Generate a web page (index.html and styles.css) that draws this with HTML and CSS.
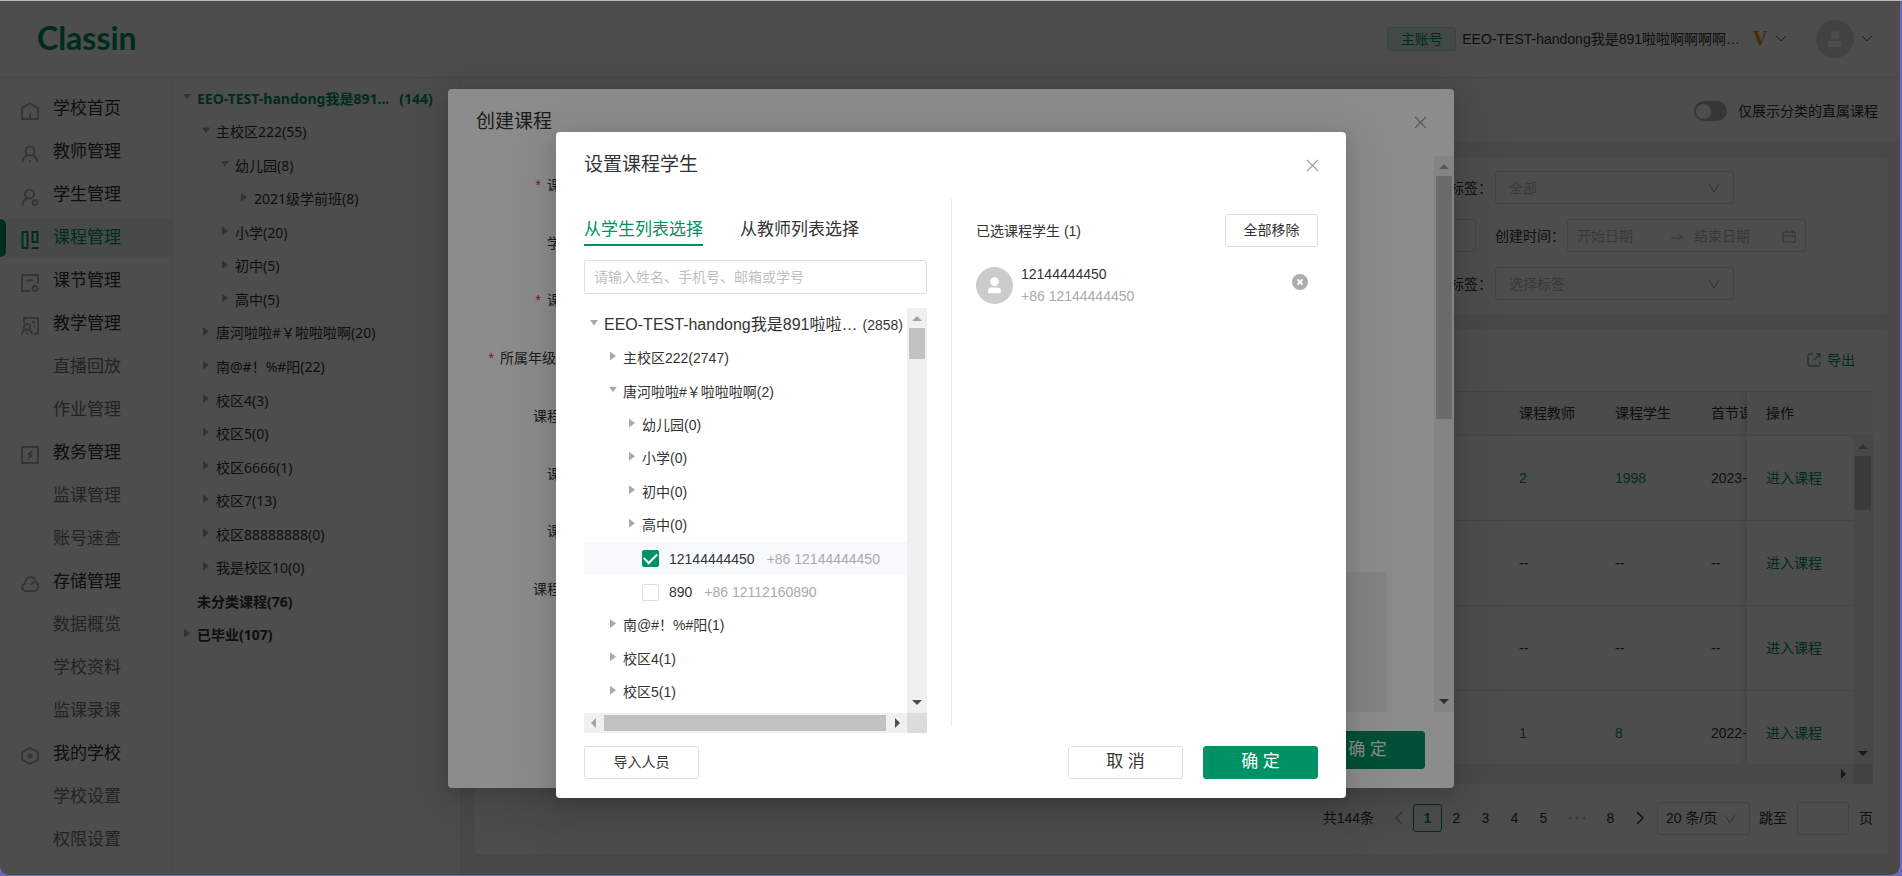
FILE: index.html
```html
<!DOCTYPE html>
<html lang="zh-CN">
<head>
<meta charset="utf-8">
<title>ClassIn</title>
<link rel="stylesheet" href="styles.css">
</head>
<body>
<div class="window">
  <header class="topbar">
    <div class="logo">Classin</div>
    <div class="account">
      <span class="badge">主账号</span>
      <span class="school">EEO-TEST-handong我是891啦啦啊啊啊啊…</span>
      <span class="vip">V</span>
      <svg class="chev" viewBox="0 0 12 8"><path d="M1 1l5 5 5-5"/></svg>
      <svg class="avatar" viewBox="0 0 38 38"><circle cx="19" cy="19" r="19" fill="#dcdcdc"/><circle cx="19" cy="15" r="4" fill="#fff"/><rect x="12" y="21" width="13" height="6" rx="1" fill="#fff"/></svg>
      <svg class="chev" viewBox="0 0 12 8"><path d="M1 1l5 5 5-5"/></svg>
    </div>
  </header>

  <div class="main">
    <nav class="sidebar">
      <a href="#"><svg viewBox="0 0 18 18"><path d="M1 6L9 1.500l8 4.500V17H1zM9 11v6"/></svg>学校首页</a>
      <a href="#"><svg viewBox="0 0 18 18"><circle cx="9" cy="6" r="4.500"/><path d="M1.500 17.500c0-3.500 2-6 4.500-7M16.500 17.500c0-3.500-2-6-4.500-7M9 15v2.500"/></svg>教师管理</a>
      <a href="#"><svg viewBox="0 0 18 18"><circle cx="8.500" cy="6" r="4.500"/><path d="M1.500 17.500c0-3.500 2-6 4.500-7"/><circle cx="14" cy="14.500" r="2.500"/></svg>学生管理</a>
      <a href="#" class="active"><svg viewBox="0 0 18 18"><path d="M1.500 1h5v16h-5zM11.500 1h5v10h-5zM10.500 17h7"/></svg>课程管理</a>
      <a href="#"><svg viewBox="0 0 18 18"><path d="M9 17H1V1h16v8M6 6.500h6"/><circle cx="14" cy="14.500" r="2.500"/></svg>课节管理</a>
      <a href="#"><svg viewBox="0 0 18 18"><path d="M3 6V1h14v15.500h-4M11 5h3M12 9h2M1 17.500c0-2.500 1-4 2.500-4.500M11 17.500c0-2.500-1-4-2.500-4.500M6 15.500v2"/><circle cx="6" cy="10" r="3"/></svg>教学管理</a>
      <a href="#" class="sub">直播回放</a>
      <a href="#" class="sub">作业管理</a>
      <a href="#"><svg viewBox="0 0 18 18"><path d="M1 1h16v16H1z"/><path d="M11.500 5.500L8 8l2.500 2L7 12.500"/></svg>教务管理</a>
      <a href="#" class="sub">监课管理</a>
      <a href="#" class="sub">账号速查</a>
      <a href="#"><svg viewBox="0 0 18 18"><path d="M4.500 16a3.700 3.700 0 0 1-.3-7.300C4.500 5 6.500 2 9.500 2s4.500 2.500 4.700 5c2 .5 3 2.300 3 4.500 0 2.500-1.800 4.500-4 4.500zM13 7.500c-1.500 0-2.500 1-2.500 2.500"/></svg>存储管理</a>
      <a href="#" class="sub">数据概览</a>
      <a href="#" class="sub">学校资料</a>
      <a href="#" class="sub">监课录课</a>
      <a href="#"><svg viewBox="0 0 18 18"><path d="M9 1l8 4.200v7.600L9 17l-8-4.200V5.200z"/><circle cx="9" cy="9" r="1.500"/></svg>我的学校</a>
      <a href="#" class="sub">学校设置</a>
      <a href="#" class="sub">权限设置</a>
    </nav>

    <aside class="campus tree">
      <div class="row lv0 strong green"><i class="caret down"></i><span>EEO-TEST-handong我是891...</span><span class="count">(144)</span></div>
      <div class="row lv1"><i class="caret down"></i><span>主校区222(55)</span></div>
      <div class="row lv2"><i class="caret down"></i><span>幼儿园(8)</span></div>
      <div class="row lv3"><i class="caret"></i><span>2021级学前班(8)</span></div>
      <div class="row lv2"><i class="caret"></i><span>小学(20)</span></div>
      <div class="row lv2"><i class="caret"></i><span>初中(5)</span></div>
      <div class="row lv2"><i class="caret"></i><span>高中(5)</span></div>
      <div class="row lv1"><i class="caret"></i><span>唐河啦啦#￥啦啦啦啊(20)</span></div>
      <div class="row lv1"><i class="caret"></i><span>南@#！%#阳(22)</span></div>
      <div class="row lv1"><i class="caret"></i><span>校区4(3)</span></div>
      <div class="row lv1"><i class="caret"></i><span>校区5(0)</span></div>
      <div class="row lv1"><i class="caret"></i><span>校区6666(1)</span></div>
      <div class="row lv1"><i class="caret"></i><span>校区7(13)</span></div>
      <div class="row lv1"><i class="caret"></i><span>校区88888888(0)</span></div>
      <div class="row lv1"><i class="caret"></i><span>我是校区10(0)</span></div>
      <div class="row lv0 strong"><i class="caret none"></i><span>未分类课程(76)</span></div>
      <div class="row lv0 strong"><i class="caret"></i><span>已毕业(107)</span></div>
    </aside>

    <section class="content">
      <div class="subbar">
        <label class="switch"><input type="checkbox" role="switch"><span>仅展示分类的直属课程</span></label>
      </div>
      <div class="card filters">
        <div class="frow">
          <label for="f-tag">标签：</label>
          <div class="group"><div class="pick"><select id="f-tag"><option>全部</option></select><svg class="vee" viewBox="0 0 12 10"><path d="M1 1l5 8 5-8"/></svg></div></div>
        </div>
        <div class="frow">
          <input class="box grow" type="text" aria-label="搜索">
          <div class="group dates"><label for="f-from">创建时间：</label>
            <div class="box range"><input id="f-from" type="text" placeholder="开始日期"><svg class="arrow" viewBox="0 0 12 8"><path d="M0 6h12L8 2"/></svg><input type="text" placeholder="结束日期" aria-label="结束日期"><svg class="cal" viewBox="0 0 14 14"><path d="M1 3h12v10H1zM1 7h12M4 1v3M10 1v3"/></svg></div>
          </div>
        </div>
        <div class="frow">
          <label for="f-tag2">标签：</label>
          <div class="group"><div class="pick"><select id="f-tag2"><option>选择标签</option></select><svg class="vee" viewBox="0 0 12 10"><path d="M1 1l5 8 5-8"/></svg></div></div>
        </div>
      </div>

      <div class="card list">
        <div class="tools"><a href="#"><svg viewBox="0 0 14 14"><path d="M6 1H2.500A1.500 1.500 0 0 0 1 2.500v9A1.500 1.500 0 0 0 2.500 13h9a1.500 1.500 0 0 0 1.500-1.500V9M9 1h4v4M13 1L7 7"/></svg>导出</a></div>
        <div class="grid">
          <div class="viewport">
            <table>
              <colgroup><col><col class="c96"><col class="c96"><col class="c52"><col class="c106"></colgroup>
              <thead><tr><th></th><th>课程教师</th><th>课程学生</th><th>首节课</th><th class="fixed">操作</th></tr></thead>
              <tbody>
                <tr><td></td><td><a href="#">2</a></td><td><a href="#">1998</a></td><td>2023-</td><td class="fixed"><a href="#">进入课程</a></td></tr>
                <tr><td></td><td>--</td><td>--</td><td>--</td><td class="fixed"><a href="#">进入课程</a></td></tr>
                <tr><td></td><td>--</td><td>--</td><td>--</td><td class="fixed"><a href="#">进入课程</a></td></tr>
                <tr><td></td><td><a href="#">1</a></td><td><a href="#">8</a></td><td>2022-</td><td class="fixed"><a href="#">进入课程</a></td></tr>
              </tbody>
            </table>
          </div>
          <div class="vside"><div class="vhead"></div><div class="vbar"><i class="tri up"></i><i class="thumb t54"></i><i class="tri dn"></i></div></div>
          <div class="hbar"><i class="tri rt"></i></div>
          <div class="corner"></div>
        </div>
        <div class="pager">
          <span class="total">共144条</span>
          <button class="pg off" aria-label="上一页"><svg viewBox="0 0 8 14"><path d="M7 1L1 7l6 6"/></svg></button>
          <button class="pg on">1</button><button class="pg">2</button><button class="pg">3</button><button class="pg">4</button><button class="pg">5</button>
          <svg class="dots" viewBox="0 0 38 6"><circle cx="12" cy="3" r="1.500"/><circle cx="19" cy="3" r="1.500"/><circle cx="26" cy="3" r="1.500"/></svg><button class="pg">8</button>
          <button class="pg" aria-label="下一页"><svg viewBox="0 0 8 14"><path d="M1 1l6 6-6 6"/></svg></button>
          <div class="pick size"><select aria-label="每页条数"><option>20 条/页</option></select><svg class="vee" viewBox="0 0 12 10"><path d="M1 1l5 8 5-8"/></svg></div>
          <label for="jump">跳至</label><input id="jump" class="box" type="text"><span>页</span>
        </div>
      </div>
    </section>
  </div>

  <div class="mask first">
    <div class="dialog course">
      <div class="dhead"><h2>创建课程</h2><button class="close" aria-label="关闭"><svg viewBox="0 0 14 14"><path d="M1 1l12 12M13 1L1 13"/></svg></button></div>
      <div class="dbody">
        <div class="labels">
          <div><b>*</b>课</div>
          <div>学</div>
          <div><b>*</b>课</div>
          <div class="long"><b>*</b>所属年级</div>
          <div>课程</div>
          <div>课</div>
          <div>课</div>
          <div>课程</div>
        </div>
        <div class="panel"></div>
        <div class="vbar"><i class="tri up"></i><i class="thumb t243"></i><i class="tri dn"></i></div>
      </div>
      <div class="dfoot"><button class="btn primary tall">确 定</button></div>
    </div>
  </div>

  <div class="mask second">
    <div class="dialog students">
      <div class="dhead"><h2>设置课程学生</h2><button class="close" aria-label="关闭"><svg viewBox="0 0 14 14"><path d="M1 1l12 12M13 1L1 13"/></svg></button></div>
      <div class="split">
        <div class="left">
          <div class="tabs"><button class="tab on">从学生列表选择</button><button class="tab">从教师列表选择</button></div>
          <input class="search" type="text" placeholder="请输入姓名、手机号、邮箱或学号" aria-label="搜索学生">
          <div class="scroller">
            <div class="tree people">
              <div class="row lv0 root"><i class="caret down"></i><span>EEO-TEST-handong我是891啦啦…</span><span class="count">(2858)</span></div>
              <div class="row lv1"><i class="caret"></i><span>主校区222(2747)</span></div>
              <div class="row lv1"><i class="caret down"></i><span>唐河啦啦#￥啦啦啦啊(2)</span></div>
              <div class="row lv2"><i class="caret"></i><span>幼儿园(0)</span></div>
              <div class="row lv2"><i class="caret"></i><span>小学(0)</span></div>
              <div class="row lv2"><i class="caret"></i><span>初中(0)</span></div>
              <div class="row lv2"><i class="caret"></i><span>高中(0)</span></div>
              <label class="row leaf picked"><input type="checkbox" checked><span>12144444450</span><em>+86 12144444450</em></label>
              <label class="row leaf"><input type="checkbox"><span>890</span><em>+86 12112160890</em></label>
              <div class="row lv1"><i class="caret"></i><span>南@#！%#阳(1)</span></div>
              <div class="row lv1"><i class="caret"></i><span>校区4(1)</span></div>
              <div class="row lv1"><i class="caret"></i><span>校区5(1)</span></div>
            </div>
            <div class="vbar"><i class="tri up"></i><i class="thumb t31"></i><i class="tri dn"></i></div>
            <div class="hbar"><i class="tri lt"></i><i class="hthumb"></i><i class="tri rt"></i></div>
            <div class="corner"></div>
          </div>
        </div>
        <div class="right">
          <div class="rhead"><span>已选课程学生 (1)</span><button class="btn small">全部移除</button></div>
          <div class="person">
            <svg class="face" viewBox="0 0 38 38"><circle cx="19" cy="19" r="19" fill="#ccc"/><circle cx="19" cy="15" r="4.500" fill="#fff"/><path d="M12.500 27v-3q0-3 3-3h7q3 0 3 3v3z" fill="#fff"/></svg>
            <div class="who"><span>12144444450</span><em>+86 12144444450</em></div>
            <button class="remove" aria-label="移除"><svg viewBox="0 0 16 16"><circle cx="8" cy="8" r="8" fill="#adadad"/><path d="M5.500 5.500l5 5M10.500 5.500l-5 5" stroke="#fff" stroke-width="1.800"/></svg></button>
          </div>
        </div>
      </div>
      <div class="foot"><button class="btn import">导入人员</button><button class="btn wide">取 消</button><button class="btn wide primary">确 定</button></div>
    </div>
  </div>
</div>
</body>
</html>
```
FILE: styles.css
```css
* { box-sizing: border-box; }
body {
  margin: 0;
  border-top: 1px solid #bbbbbb;
  background: #6a67c6;
  font-family: "Liberation Sans", "Noto Sans CJK SC", sans-serif;
  font-size: 14px;
  line-height: 22px;
  color: #333;
}
a { color: #009264; text-decoration: none; }
button, input, select { font: inherit; color: inherit; }
button { cursor: pointer; }
i, em { font-style: normal; }
svg { fill: none; stroke: currentColor; flex: none; }
svg.avatar, svg.face, .remove svg circle { stroke: none; }

.window {
  position: relative;
  display: flex;
  flex-direction: column;
  height: calc(100vh - 2px);
  margin-right: 2px;
  border-radius: 0 0 8px 8px;
  overflow: hidden;
  background: #fff;
}

/* top bar */
.topbar {
  display: flex;
  justify-content: space-between;
  align-items: center;
  flex: none;
  height: 77px;
  padding: 0 27px 0 37px;
  border-bottom: 1px solid #ececec;
}
.logo { padding-bottom: 3px; font-family: Lato, "Open Sans", sans-serif; font-size: 32px; font-weight: 700; line-height: 36px; color: #009264; }
.account { display: flex; align-items: center; color: #333; }
.badge { width: 69px; height: 24px; line-height: 22px; text-align: center; color: #009264; background: #e0f2ec; border: 1px solid #b7e0d2; border-radius: 3px; margin-right: 6px; }
.vip { font-family: "DejaVu Serif", serif; font-weight: 700; font-size: 18px; color: #ff9a00; margin: 0 8px 0 13px; }
.chev { width: 12px; height: 8px; color: #555; }
.avatar { width: 38px; height: 38px; margin: 0 7px 0 29px; }

.main { display: flex; flex: 1; min-height: 0; }

/* navigation */
.sidebar {
  display: flex;
  flex-direction: column;
  gap: 5px;
  flex: none;
  width: 173px;
  padding-top: 12px;
  border-right: 1px solid #ececec;
}
.sidebar a { position: relative; display: flex; align-items: center; gap: 14px; flex: none; height: 38px; padding: 0 0 0 21px; font-size: 17px; color: #333; }
.sidebar svg { width: 18px; height: 18px; stroke-width: 2; color: #aeb2b4; margin-top: 3px; }
.sidebar a.sub { padding-left: 53px; color: #777; }
.sidebar a.active { background: #eef7f4; color: #009264; }
.sidebar a.active::before { content: ""; position: absolute; inset: 0 auto 0 0; width: 6px; border-radius: 0 6px 6px 0; background: #009264; }
.sidebar a.active svg { color: #009264; }

/* trees */
.tree { display: grid; grid-auto-rows: 1fr; }
.row { display: flex; align-items: center; white-space: nowrap; }
.caret { flex: none; width: 12px; height: 9px; margin: 0 4px 4px 0; background: #aaa; clip-path: polygon(25% 0, 75% 50%, 25% 100%); }
.caret.down { clip-path: polygon(17% 20%, 83% 20%, 50% 80%); }
.caret.none { visibility: hidden; }
.lv0 { padding-left: 4px; }
.lv1 { padding-left: 23px; }
.lv2 { padding-left: 42px; }
.lv3 { padding-left: 61px; }
.leaf { padding-left: 58px; }
.strong { font-weight: 700; }
.green { color: #009264; }
.campus { flex: none; width: 287px; height: 578px; margin-top: 4px; padding: 0 0 8px 4px; font-family: "Noto Sans", "Noto Sans CJK SC", sans-serif; }
.campus .count { margin-left: 10px; }

/* content */
.content { display: flex; flex-direction: column; flex: 1; min-width: 0; background: #eef1f4; border-left: 1px solid #ececec; }
.subbar { display: flex; justify-content: flex-end; flex: none; height: 63px; padding: 22px 22px 0 0; background: #fff; }
.switch { display: flex; gap: 11px; height: 22px; align-items: center; }
.switch input { appearance: none; display: flex; align-items: center; width: 33px; height: 20px; margin: 0; padding: 2px; border-radius: 10px; background: #b5b5b5; }
.switch input::before { content: ""; width: 15px; height: 15px; border-radius: 50%; background: #fff; }
.card { background: #fff; border-radius: 4px; margin: 16px 12px 0 14px; }
.filters { display: flex; flex-direction: column; gap: 15px; padding: 14px 82px 15px 16px; }
.frow { display: flex; justify-content: flex-end; align-items: center; height: 33px; }
.frow > label { margin-right: 3px; }
.group { width: 311px; }
.dates { display: flex; align-items: center; justify-content: space-between; }
.box, .pick select { height: 33px; background: #fff; border: 1px solid #dedede; border-radius: 3px; padding: 0 9px; }
.grow { flex: 1; min-width: 0; margin-right: 19px; }
.range { display: flex; align-items: center; width: 239px; }
.range input { width: 95px; min-width: 0; padding: 0; border: 0; background: none; }
.range input + svg + input { width: 89px; margin-left: 11px; }
::placeholder { color: #bfbfbf; opacity: 1; }
.arrow { width: 12px; height: 8px; color: #aaa; }
.cal { width: 14px; height: 14px; color: #aaa; }
.pick { position: relative; width: 239px; }
.pick select { appearance: none; width: 100%; padding: 0 13px; color: #bfbfbf; }
.pick .vee { position: absolute; right: 14px; top: 12px; width: 12px; height: 10px; color: #aaa; }
.list { margin-top: 14px; padding: 20px 15px 0; height: 525px; }
.tools { display: flex; justify-content: flex-end; padding-right: 18px; height: 42px; }
.tools a { display: flex; align-items: center; gap: 6px; height: 22px; }
.tools svg { width: 14px; height: 14px; }

.grid { display: grid; grid-template-columns: 1fr 20px; grid-template-rows: 373px 20px; }
.viewport { overflow: hidden; }
table { width: 100%; table-layout: fixed; border-collapse: separate; border-spacing: 0; }
.c96 { width: 96px; }
.c52 { width: 52px; }
.c106 { width: 106px; }
th, td { height: 85px; padding: 0 0 1px 16px; text-align: left; font-weight: 400; white-space: nowrap; overflow: hidden; border-bottom: 1px solid #e6e6e6; }
th { height: 45px; background: #f8f9f9; border-top: 1px solid #e6e6e6; }
.fixed { padding-left: 19px; background: #fff; overflow: visible; box-shadow: -2px 0 6px rgba(0, 0, 0, 0.15); clip-path: inset(0 0 0 -10px); }
th.fixed { background: #f9fafa; }
.vside { display: flex; flex-direction: column; }
.vhead { height: 45px; background: #f9fafa; border-top: 1px solid #e6e6e6; border-bottom: 1px solid #e6e6e6; }

/* scroll bars */
.vbar, .hbar { display: flex; align-items: center; justify-content: space-between; background: #f0f0f0; }
.vbar { flex-direction: column; flex: 1; width: 20px; }
.corner { background: #dcdcdc; }
.tri { flex: none; width: 20px; height: 20px; background: #505050; }
.tri.up { background: #a3a3a3; clip-path: polygon(5px 13px, 10px 8px, 15px 13px); }
.tri.dn { clip-path: polygon(5px 7px, 15px 7px, 10px 12px); }
.tri.lt { background: #a3a3a3; clip-path: polygon(12px 5px, 12px 15px, 7px 10px); }
.tri.rt { clip-path: polygon(8px 5px, 8px 15px, 13px 10px); }
.thumb { width: 16px; background: #c1c1c1; margin-bottom: auto; }
.t31 { height: 31px; }
.t54 { height: 54px; }
.t243 { height: 243px; }
.hthumb { width: 282px; height: 16px; margin-right: auto; background: #c1c1c1; }
.grid .hbar { justify-content: flex-end; }

.pager { display: flex; align-items: center; justify-content: flex-end; height: 68px; }
.total { margin-right: 10px; }
.pg { display: flex; align-items: center; justify-content: center; width: 29px; height: 28px; padding: 0; border: 0; border-radius: 3px; background: none; }
.pg svg { width: 8px; height: 14px; stroke-width: 1.500; }
.pg.off { color: #aaa; }
.pg.on { color: #009264; font-weight: 700; border: 1px solid #009264; }
.dots { width: 38px; height: 6px; fill: #bbb; stroke: none; }
.pick.size { width: 93px; margin: 0 9px 0 3px; }
.pick.size select { color: #333; padding: 0 8px; }
#jump { width: 52px; margin: 0 10px; }

/* dialogs */
.mask { position: absolute; inset: 0; display: flex; justify-content: center; align-items: flex-start; padding-left: 2px; background: rgba(0, 0, 0, 0.45); }
.mask.first { padding-top: 88px; }
.mask.second { padding-top: 131px; }
.dialog { background: #fff; border-radius: 4px; box-shadow: 0 6px 16px rgba(0, 0, 0, 0.12), 0 9px 48px 16px rgba(0, 0, 0, 0.08); }
.dhead { display: flex; align-items: center; justify-content: space-between; height: 67px; padding: 0 27px 1px 28px; }
.dhead h2 { margin: 0; font-size: 19px; line-height: 28px; font-weight: 400; }
.close { display: flex; padding: 0; border: 0; background: none; color: #999; }
.close svg { width: 13px; height: 13px; stroke-width: 1.300; }
.course { width: 1006px; }
.dbody { display: flex; height: 556px; }
.labels { display: grid; grid-auto-rows: 1fr; align-items: center; flex: 1; max-width: 113px; height: 462px; text-align: right; }
.labels b { margin-right: 6px; font-weight: 400; color: #f5222d; }
.labels .long { padding-right: 5px; }
.panel { flex: 1; align-self: flex-end; height: 140px; margin-right: 47px; background: #f0f1f2; border-radius: 4px 4px 0 0; }
.dbody .vbar { flex: none; }
.dfoot { display: flex; justify-content: flex-end; padding: 19px 29px 19px 0; }
.btn { height: 33px; padding: 0 0 1px; background: #fff; border: 1px solid #dedede; border-radius: 3px; }
.btn.primary { width: 115px; font-size: 17px; color: #fff; background: #009264; border-color: #009264; }
.btn.tall { height: 38px; }
.btn.wide { width: 115px; margin-left: 20px; font-size: 17px; }
.btn.import { width: 115px; margin-right: auto; }
.btn.small { width: 93px; }

.students { width: 790px; }
.split { display: flex; padding: 0 28px; }
.left { width: 343px; padding-top: 15px; }
.tabs { display: flex; gap: 37px; margin-bottom: 14px; }
.tab { height: 32px; padding: 2px 0 0; font-size: 17px; line-height: 28px; background: none; border: 0; border-bottom: 2px solid transparent; }
.tab.on { color: #009264; border-color: #009264; }
.search { display: block; width: 100%; height: 34px; margin-bottom: 14px; padding: 0 9px 1px; border: 1px solid #dedede; border-radius: 3px; }
.scroller { display: grid; grid-template-columns: 1fr 20px; grid-template-rows: 405px 20px; }
.people { padding-bottom: 4px; }
.root { font-size: 16px; }
.root .count { margin-left: auto; padding-right: 4px; font-size: 14px; }
.picked { background: #f7f9fb; }
.leaf input { appearance: none; display: flex; align-items: center; justify-content: center; width: 17px; height: 17px; margin: 0 10px 0 0; border: 1px solid #dedede; border-radius: 2px; background: #fff; }
.leaf input:checked { background: #009264; border-color: #009264; }
.leaf input:checked::before { content: ""; width: 11px; height: 6px; margin-bottom: 4px; border: solid #fff; border-width: 0 0 2px 2px; transform: rotate(-45deg); }
.leaf em { margin-left: 12px; color: #aaa; }
.right { flex: 1; margin: 0 0 7px 24px; padding: 15px 0 0 24px; border-left: 1px solid #e8e8e8; }
.rhead { display: flex; align-items: center; justify-content: space-between; margin-bottom: 16px; }
.person { display: flex; align-items: center; padding-right: 10px; }
.face { width: 37px; height: 37px; }
.who { display: flex; flex-direction: column; flex: 1; margin-left: 8px; }
.who em { color: #aaa; }
.remove { align-self: flex-start; display: flex; margin-top: 11px; padding: 0; border: 0; background: none; }
.remove svg { width: 16px; height: 16px; }
.foot { display: flex; padding: 13px 28px 19px; }
```
